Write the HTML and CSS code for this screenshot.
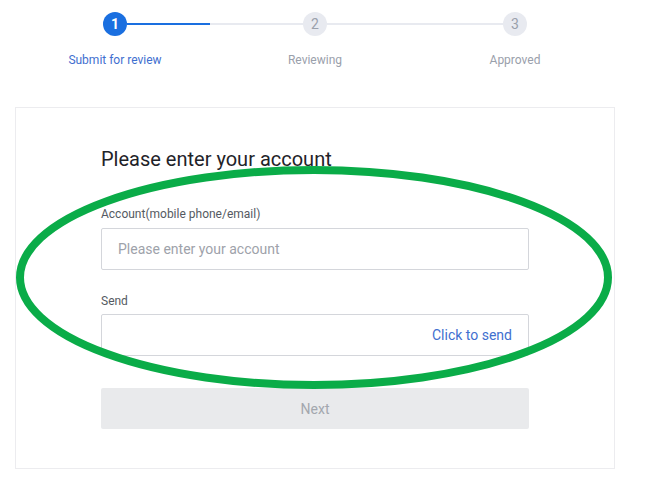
FILE: index.html
```html
<!DOCTYPE html>
<html>
<head>
<meta charset="utf-8">
<link rel="stylesheet" href="styles.css">
</head>
<body>
<div class="page">
  <div class="steps">
    <div class="track">
      <span class="dot active">1</span>
      <span class="line half"></span>
      <span class="dot">2</span>
      <span class="line"></span>
      <span class="dot">3</span>
    </div>
    <div class="labels">
      <span class="label active">Submit for review</span>
      <span class="label">Reviewing</span>
      <span class="label">Approved</span>
    </div>
  </div>
  <div class="card">
    <h1 class="title">Please enter your account</h1>
    <div class="field">
      <div class="field-label">Account(mobile phone/email)</div>
      <div class="input"><span class="placeholder">Please enter your account</span></div>
    </div>
    <div class="field">
      <div class="field-label">Send</div>
      <div class="input input-send"><span class="send-link">Click to send</span></div>
    </div>
    <div class="btn">Next</div>
  </div>
  <svg class="annotation" width="663" height="498" viewBox="0 0 663 498">
    <ellipse cx="314" cy="277.5" rx="294" ry="107.5" fill="none" stroke="#0aac48" stroke-width="8"/>
  </svg>
</div>
</body>
</html>
```
FILE: styles.css
```css
* { box-sizing: border-box; }
html, body { margin: 0; padding: 0; background: #fff; }
body { font-family: Roboto, "Liberation Sans", Arial, sans-serif; }
.page { position: relative; width: 663px; height: 498px; overflow: hidden; }
.steps { width: 600px; margin-left: 15px; padding-top: 12px; }
.track { display: flex; align-items: center; padding: 0 88px; }
.dot {
  width: 24px; height: 24px; border-radius: 50%;
  background: #e8eaf0; color: #9aa0ab;
  font-size: 14px; line-height: 24px; text-align: center;
  flex: none;
}
.dot.active { background: #1a6fe0; color: #fff; font-weight: 700; }
.line { flex: 1; height: 2px; background: #e8eaf0; }
.line.half { background: linear-gradient(to right, #1a6fe0 0, #1a6fe0 47%, #e8eaf0 47%); }
.labels { display: grid; grid-template-columns: repeat(3, 200px); margin-top: 16px; }
.label { text-align: center; font-size: 12px; line-height: 16px; color: #9aa0ab; }
.label.active { color: #3f6fcf; }
.card {
  margin: 39px 0 0 15px; width: 600px; height: 362px;
  border: 1px solid #ececef;
  padding: 40px 85px 0;
}
.title { margin: 0; font-size: 20px; font-weight: 400; line-height: 22px; color: #1f2329; }
.field { margin-top: 36px; }
.field + .field { margin-top: 23px; }
.field-label { font-size: 12px; line-height: 16px; color: #555a62; margin-bottom: 6px; }
.field + .field .field-label { margin-bottom: 5px; }
.input {
  height: 42px; border: 1px solid #d4d6db; border-radius: 2px;
  display: flex; align-items: center; padding: 0 16px;
  font-size: 14px;
}
.placeholder { color: #9ea2aa; }
.input-send { justify-content: flex-end; }
.send-link { color: #3f6fcf; }
.btn {
  margin-top: 32px; height: 41px; border-radius: 2px;
  background: #e9eaec; color: #a3a7ae;
  font-size: 14px; display: flex; align-items: center; justify-content: center;
}
.annotation { position: absolute; left: 0; top: 0; pointer-events: none; }
```
